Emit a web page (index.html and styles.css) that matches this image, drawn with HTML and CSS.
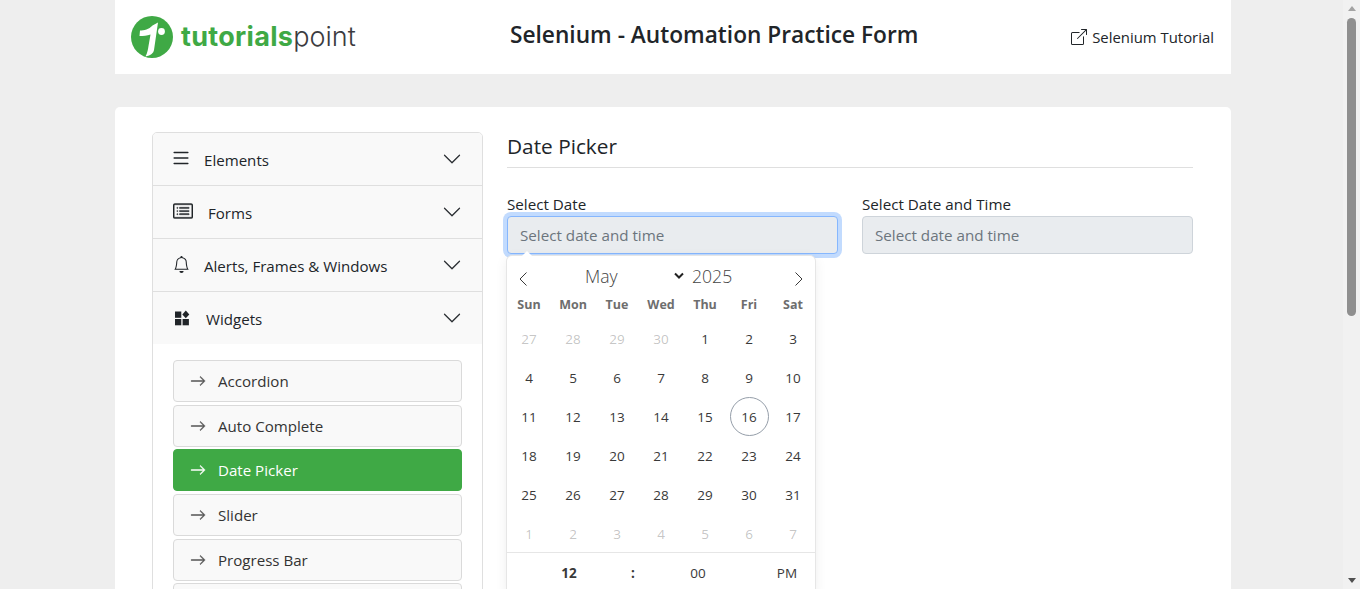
FILE: index.html
```html
<!DOCTYPE html>
<html lang="en">

<head>
  <meta charset="UTF-8" />
  <title>Selenium - Automation Practice Form</title>
  <link rel="stylesheet" href="styles.css">
</head>

<body>
  <div class="window">
    <div class="page">
      <header class="top">
        <a class="logo" href="#">
          <svg class="logo-mark" viewBox="0 0 42 42">
            <circle cx="21" cy="21" r="21" fill="#3fa945" />
            <path d="M9 14.5 C13 14.5 18 13.5 21.5 9.5 L27 6.5 L23 34 C22.5 37 20 39.5 14.5 40.5 C16.5 37 17 33 17.5 30 L19.5 18.5 C16 19.8 12.5 20 8.5 20 Z" fill="#fff" />
            <circle cx="30.5" cy="15.5" r="3.4" fill="#fff" />
          </svg>
          <span class="logo-text"><b>tutorials</b>point</span>
        </a>
        <h1 class="page-title">Selenium - Automation Practice Form</h1>
        <a class="tutorial-link" href="#">
          <svg class="ext-icon" viewBox="0 0 16 16" fill="currentColor">
            <path d="M8.636 3.5a.5.5 0 0 0-.5-.5H1.5A1.5 1.5 0 0 0 0 4.5v10A1.5 1.5 0 0 0 1.5 16h10a1.5 1.5 0 0 0 1.5-1.5V7.864a.5.5 0 0 0-1 0V14.5a.5.5 0 0 1-.5.5h-10a.5.5 0 0 1-.5-.5v-10a.5.5 0 0 1 .5-.5h6.636a.5.5 0 0 0 .5-.5z" />
            <path d="M16 .5a.5.5 0 0 0-.5-.5h-5a.5.5 0 0 0 0 1h3.793L6.146 9.146a.5.5 0 1 0 .708.708L15 1.707V5.5a.5.5 0 0 0 1 0v-5z" />
          </svg>
          Selenium Tutorial
        </a>
      </header>

      <main class="card">
        <nav class="accordion">
          <div class="acc-head">
            <svg class="acc-icon icon-list" viewBox="0 0 16 16" fill="currentColor"><path d="M2.5 12a.5.5 0 0 1 .5-.5h10a.5.5 0 0 1 0 1H3a.5.5 0 0 1-.5-.5zm0-4a.5.5 0 0 1 .5-.5h10a.5.5 0 0 1 0 1H3a.5.5 0 0 1-.5-.5zm0-4a.5.5 0 0 1 .5-.5h10a.5.5 0 0 1 0 1H3a.5.5 0 0 1-.5-.5z" /></svg>
            <span class="acc-label">Elements</span>
            <svg class="chevron" viewBox="0 0 16 16" fill="currentColor"><path d="M1.646 4.646a.5.5 0 0 1 .708 0L8 10.293l5.646-5.647a.5.5 0 0 1 .708.708l-6 6a.5.5 0 0 1-.708 0l-6-6a.5.5 0 0 1 0-.708z" /></svg>
          </div>
          <div class="acc-head">
            <svg class="acc-icon icon-forms" viewBox="0 0 16 16" fill="currentColor" stroke="currentColor" stroke-width=".3"><path d="M14.5 3a.5.5 0 0 1 .5.5v9a.5.5 0 0 1-.5.5h-13a.5.5 0 0 1-.5-.5v-9a.5.5 0 0 1 .5-.5h13zm-13-1A1.5 1.5 0 0 0 0 3.5v9A1.5 1.5 0 0 0 1.5 14h13a1.5 1.5 0 0 0 1.5-1.5v-9A1.5 1.5 0 0 0 14.5 2h-13z" /><path d="M5 8a.5.5 0 0 1 .5-.5h7a.5.5 0 0 1 0 1h-7A.5.5 0 0 1 5 8zm0-2.5a.5.5 0 0 1 .5-.5h7a.5.5 0 0 1 0 1h-7a.5.5 0 0 1-.5-.5zm0 5a.5.5 0 0 1 .5-.5h7a.5.5 0 0 1 0 1h-7a.5.5 0 0 1-.5-.5zm-1-5a.5.5 0 1 1-1 0 .5.5 0 0 1 1 0zM4 8a.5.5 0 1 1-1 0 .5.5 0 0 1 1 0zm0 2.5a.5.5 0 1 1-1 0 .5.5 0 0 1 1 0z" /></svg>
            <span class="acc-label">Forms</span>
            <svg class="chevron" viewBox="0 0 16 16" fill="currentColor"><path d="M1.646 4.646a.5.5 0 0 1 .708 0L8 10.293l5.646-5.647a.5.5 0 0 1 .708.708l-6 6a.5.5 0 0 1-.708 0l-6-6a.5.5 0 0 1 0-.708z" /></svg>
          </div>
          <div class="acc-head">
            <svg class="acc-icon icon-bell" viewBox="0 0 16 16" fill="currentColor"><path d="M8 16a2 2 0 0 0 2-2H6a2 2 0 0 0 2 2zM8 1.918l-.797.161A4.002 4.002 0 0 0 4 6c0 .628-.134 2.197-.459 3.742-.16.767-.376 1.566-.663 2.258h10.244c-.287-.692-.502-1.49-.663-2.258C12.134 8.197 12 6.628 12 6a4.002 4.002 0 0 0-3.203-3.92L8 1.917zM14.22 12c.223.447.481.801.78 1H1c.299-.199.557-.553.78-1C2.68 10.2 3 6.88 3 6c0-2.42 1.72-4.44 4.005-4.901a1 1 0 1 1 1.99 0A5.002 5.002 0 0 1 13 6c0 .88.32 4.2 1.22 6z" /></svg>
            <span class="acc-label">Alerts, Frames &amp; Windows</span>
            <svg class="chevron" viewBox="0 0 16 16" fill="currentColor"><path d="M1.646 4.646a.5.5 0 0 1 .708 0L8 10.293l5.646-5.647a.5.5 0 0 1 .708.708l-6 6a.5.5 0 0 1-.708 0l-6-6a.5.5 0 0 1 0-.708z" /></svg>
          </div>
          <div class="acc-head acc-open">
            <svg class="acc-icon icon-widgets" viewBox="0 0 16 16" fill="currentColor"><rect x="1" y="1.5" width="6.3" height="6.3" /><rect x="1" y="9" width="6.3" height="6.3" /><rect x="8.6" y="9" width="6.3" height="6.3" /><path d="M11.8 .6 15.3 4.4 11.8 8.2 8.3 4.4z" /></svg>
            <span class="acc-label">Widgets</span>
            <svg class="chevron" viewBox="0 0 16 16" fill="currentColor"><path d="M1.646 4.646a.5.5 0 0 1 .708 0L8 10.293l5.646-5.647a.5.5 0 0 1 .708.708l-6 6a.5.5 0 0 1-.708 0l-6-6a.5.5 0 0 1 0-.708z" /></svg>
          </div>
          <ul class="sub-list">
            <li class="sub-item"><svg class="arrow" viewBox="0 0 16 16" fill="currentColor" stroke="currentColor" stroke-width=".5"><path d="M1 8a.5.5 0 0 1 .5-.5h11.793l-3.147-3.146a.5.5 0 0 1 .708-.708l4 4a.5.5 0 0 1 0 .708l-4 4a.5.5 0 0 1-.708-.708L13.293 8.5H1.5A.5.5 0 0 1 1 8z" /></svg>Accordion</li>
            <li class="sub-item"><svg class="arrow" viewBox="0 0 16 16" fill="currentColor" stroke="currentColor" stroke-width=".5"><path d="M1 8a.5.5 0 0 1 .5-.5h11.793l-3.147-3.146a.5.5 0 0 1 .708-.708l4 4a.5.5 0 0 1 0 .708l-4 4a.5.5 0 0 1-.708-.708L13.293 8.5H1.5A.5.5 0 0 1 1 8z" /></svg>Auto Complete</li>
            <li class="sub-item active"><svg class="arrow" viewBox="0 0 16 16" fill="currentColor" stroke="currentColor" stroke-width=".5"><path d="M1 8a.5.5 0 0 1 .5-.5h11.793l-3.147-3.146a.5.5 0 0 1 .708-.708l4 4a.5.5 0 0 1 0 .708l-4 4a.5.5 0 0 1-.708-.708L13.293 8.5H1.5A.5.5 0 0 1 1 8z" /></svg>Date Picker</li>
            <li class="sub-item"><svg class="arrow" viewBox="0 0 16 16" fill="currentColor" stroke="currentColor" stroke-width=".5"><path d="M1 8a.5.5 0 0 1 .5-.5h11.793l-3.147-3.146a.5.5 0 0 1 .708-.708l4 4a.5.5 0 0 1 0 .708l-4 4a.5.5 0 0 1-.708-.708L13.293 8.5H1.5A.5.5 0 0 1 1 8z" /></svg>Slider</li>
            <li class="sub-item"><svg class="arrow" viewBox="0 0 16 16" fill="currentColor" stroke="currentColor" stroke-width=".5"><path d="M1 8a.5.5 0 0 1 .5-.5h11.793l-3.147-3.146a.5.5 0 0 1 .708-.708l4 4a.5.5 0 0 1 0 .708l-4 4a.5.5 0 0 1-.708-.708L13.293 8.5H1.5A.5.5 0 0 1 1 8z" /></svg>Progress Bar</li>
            <li class="sub-item"></li>
          </ul>
        </nav>

        <section class="content">
          <h2 class="section-title">Date Picker</h2>
          <div class="fields">
            <div class="field">
              <label class="field-label">Select Date</label>
              <div class="field-input focused">Select date and time</div>

              <div class="calendar">
                <div class="cal-month">
                  <svg class="cal-nav" viewBox="0 0 10 16" fill="none" stroke="currentColor"><path d="M8.5 1.5 2 8l6.5 6.5" /></svg>
                  <span class="cal-name">May</span>
                  <svg class="cal-caret" viewBox="0 0 10 7" fill="none" stroke="currentColor" stroke-width="2"><path d="M1 1.5l4 4 4-4" /></svg>
                  <span class="cal-year">2025</span>
                  <svg class="cal-nav" viewBox="0 0 10 16" fill="none" stroke="currentColor"><path d="M1.5 1.5 8 8l-6.5 6.5" /></svg>
                </div>
                <div class="cal-weekdays">
                  <span>Sun</span><span>Mon</span><span>Tue</span><span>Wed</span><span>Thu</span><span>Fri</span><span>Sat</span>
                </div>
                <div class="cal-days">
                  <span class="muted">27</span><span class="muted">28</span><span class="muted">29</span><span class="muted">30</span><span>1</span><span>2</span><span>3</span>
                  <span>4</span><span>5</span><span>6</span><span>7</span><span>8</span><span>9</span><span>10</span>
                  <span>11</span><span>12</span><span>13</span><span>14</span><span>15</span><span class="today">16</span><span>17</span>
                  <span>18</span><span>19</span><span>20</span><span>21</span><span>22</span><span>23</span><span>24</span>
                  <span>25</span><span>26</span><span>27</span><span>28</span><span>29</span><span>30</span><span>31</span>
                  <span class="muted">1</span><span class="muted">2</span><span class="muted">3</span><span class="muted">4</span><span class="muted">5</span><span class="muted">6</span><span class="muted">7</span>
                </div>
                <div class="cal-time">
                  <span class="time-hour">12</span>
                  <span class="time-sep">:</span>
                  <span class="time-min">00</span>
                  <span class="time-ampm">PM</span>
                </div>
              </div>
            </div>
            <div class="field">
              <label class="field-label">Select Date and Time</label>
              <div class="field-input">Select date and time</div>
            </div>
          </div>
        </section>
      </main>
    </div>

    <div class="scrollbar">
      <span class="scroll-up"></span>
      <span class="scroll-thumb"></span>
      <span class="scroll-down"></span>
    </div>
  </div>
</body>

</html>
```

FILE: styles.css
```css
* {
  box-sizing: border-box;
}

html,
body {
  margin: 0;
  height: 589px;
  overflow: hidden;
}

body {
  background-color: #eeeeee;
  color: #212529;
  font-family: "Open Sans", "Noto Sans", sans-serif;
  font-size: 15px;
}

.window {
  display: flex;
  height: 589px;
}

.page {
  flex: 1;
  height: 589px;
  overflow: hidden;
  padding: 0 112px 0 115px;
}

/* Header */
.top {
  display: flex;
  align-items: center;
  height: 74px;
  padding: 0 17px 2px 16px;
  background-color: white;
}

.logo {
  display: flex;
  align-items: center;
  gap: 8px;
  width: 227px;
  text-decoration: none;
}

.logo-mark {
  width: 42px;
  height: 42px;
  flex: none;
  margin: 1px 0 -1px;
}

.logo-text {
  color: #3b3b40;
  font-family: "Inter", sans-serif;
  font-size: 27px;
  font-weight: 300;
  line-height: 1;
}

.logo-text b {
  color: #3fa945;
  font-weight: 700;
  letter-spacing: 0.3px;
}

.page-title {
  margin: 0 0 2px 152px;
  font-size: 22.7px;
  font-weight: 600;
  line-height: 1.2;
  white-space: nowrap;
}

.tutorial-link {
  display: flex;
  align-items: center;
  gap: 5px;
  margin-left: auto;
  padding-top: 2px;
  color: #212529;
  font-size: 14.9px;
  text-decoration: none;
}

.ext-icon {
  width: 16px;
  height: 16px;
}

/* Main card */
.card {
  display: flex;
  align-items: flex-start;
  gap: 24px;
  height: 600px;
  margin-top: 33px;
  padding: 25px 38px 0 37px;
  background-color: white;
  border-radius: 5px 5px 0 0;
}

.accordion {
  width: 331px;
  flex: none;
  border: 1px solid #dfdfdf;
  border-radius: 5px;
  overflow: hidden;
}

.acc-head {
  display: flex;
  align-items: center;
  height: 53px;
  padding: 0 20px;
  background-color: #f9f9f9;
  border-bottom: 1px solid #dfdfdf;
  color: #212529;
}

.acc-open {
  height: 52px;
  border-bottom: 0;
}

.acc-icon {
  flex: none;
}

.icon-list {
  width: 22px;
  height: 22px;
  margin: -2px 12px 0 -3px;
}

.icon-forms {
  width: 20px;
  height: 20px;
  margin: -2px 15px 0 0;
}

.icon-bell {
  width: 17px;
  height: 17px;
  margin: -1px 14px 0 0;
}

.icon-widgets {
  width: 16px;
  height: 16px;
  margin: 0 16px 0 1px;
}

.acc-label {
  flex: 1;
  font-size: 15.1px;
  padding-top: 2px;
}

.chevron {
  width: 20px;
  height: 20px;
  margin: 0;
  color: #2b2f33;
}

.sub-list {
  list-style: none;
  margin: 0;
  padding: 16px 20px 0;
}

.sub-item {
  display: flex;
  align-items: center;
  height: 42px;
  margin-bottom: 2.7px;
  padding-left: 16px;
  background-color: #f9f9f9;
  border: 1px solid #dadada;
  border-radius: 4px;
  color: #333;
  font-size: 15.1px;
}

.sub-item.active {
  background-color: #3fa945;
  border-color: #3fa945;
  color: white;
}

.arrow {
  width: 16px;
  height: 16px;
  margin-right: 12px;
  flex: none;
  color: #555;
}

.active .arrow {
  color: white;
}

/* Date picker section */
.content {
  flex: 1;
}

.section-title {
  margin: 0;
  height: 36px;
  border-bottom: 1px solid #dfdfdf;
  font-size: 20.8px;
  font-weight: 400;
  line-height: 28px;
}

.fields {
  display: flex;
  gap: 24px;
  margin-top: 26px;
}

.field {
  position: relative;
  flex: 1;
}

.field-label {
  display: block;
  height: 22px;
  font-size: 15.2px;
  line-height: 20px;
}

.field-input {
  height: 38px;
  padding: 0 12px;
  background-color: #e9ecef;
  border: 1px solid #ced4da;
  border-radius: 4px;
  color: #6c757d;
  font-size: 15.2px;
  line-height: 36px;
}

.field-input.focused {
  border-color: #86b7fe;
  box-shadow: 0 0 0 4px #c2dbfe;
}

/* Calendar popup */
.calendar {
  position: absolute;
  top: 62px;
  left: 0;
  width: 308px;
  height: 340px;
  background-color: white;
  border-radius: 5px;
  box-shadow: 1px 0 0 #e6e6e6, -1px 0 0 #e6e6e6, 0 1px 0 #e6e6e6, 0 -1px 0 #e6e6e6, 0 3px 13px rgba(0, 0, 0, .08);
}

.calendar::before {
  content: "";
  position: absolute;
  top: -5px;
  left: 15px;
  border: 5px solid transparent;
  border-top: 0;
  border-bottom-color: white;
}

.cal-month {
  display: flex;
  align-items: center;
  height: 33px;
  padding: 6px 11px 0 11px;
  color: #393939;
}

.cal-nav {
  width: 10px;
  height: 16px;
  flex: none;
  margin-top: 6px;
}

.cal-name {
  width: 88px;
  margin-left: 57px;
  color: #444;
  font-size: 17.6px;
  font-weight: 300;
}

.cal-caret {
  width: 10px;
  height: 7px;
  margin-left: 1px;
  color: #222;
  flex: none;
}

.cal-year {
  flex: 1;
  margin-left: 8px;
  color: #444;
  font-size: 17.6px;
  font-weight: 300;
}

.cal-weekdays,
.cal-days {
  display: grid;
  grid-template-columns: repeat(7, 44px);
}

.cal-weekdays {
  height: 27px;
  color: #6e6e6e;
  font-size: 12.5px;
  font-weight: 700;
  line-height: 31px;
  text-align: center;
}

.cal-days {
  grid-auto-rows: 39px;
  padding-top: 3px;
  color: #393939;
  font-size: 13.5px;
}

.cal-days span {
  display: flex;
  align-items: center;
  justify-content: center;
}

.cal-days .muted {
  color: rgba(57, 57, 57, .3);
}

.cal-days .today {
  width: 39px;
  justify-self: center;
  border: 1px solid #959ea9;
  border-radius: 50%;
}

.cal-time {
  display: grid;
  grid-template-columns: 124px 0 134px 44px;
  height: 40px;
  margin-top: -1px;
  border-top: 1px solid #e6e6e6;
  color: #393939;
  font-size: 13.5px;
  line-height: 40px;
  text-align: center;
}

.time-hour,
.time-sep {
  font-weight: 700;
}

/* Scrollbar */
.scrollbar {
  display: flex;
  flex-direction: column;
  align-items: center;
  width: 17px;
  flex: none;
  background-color: #f1f1f1;
}

.scroll-up,
.scroll-down {
  width: 0;
  height: 0;
  flex: none;
  border-left: 4.5px solid transparent;
  border-right: 4.5px solid transparent;
}

.scroll-up {
  margin-top: 6px;
  border-bottom: 5px solid #a3a3a3;
}

.scroll-down {
  margin-top: auto;
  margin-bottom: 6px;
  border-top: 5px solid #505050;
}

.scroll-thumb {
  width: 9px;
  height: 298px;
  margin-top: 7px;
  background-color: #8f8f8f;
  border-radius: 5px;
}
```
